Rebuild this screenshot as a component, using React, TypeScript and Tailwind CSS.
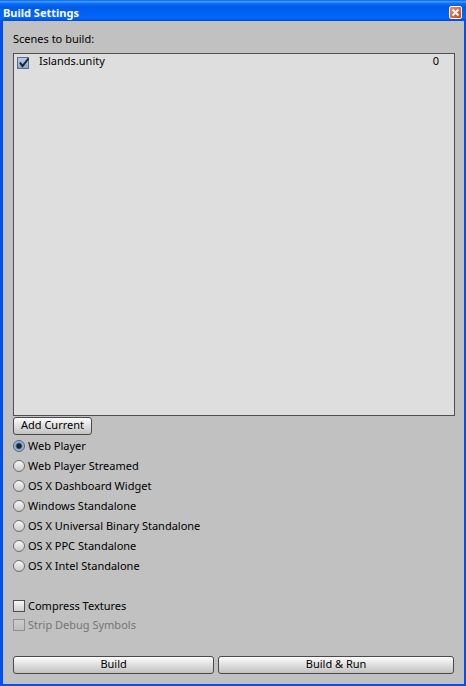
import { useState } from 'react';

const targets = [
  'Web Player',
  'Web Player Streamed',
  'OS X Dashboard Widget',
  'Windows Standalone',
  'OS X Universal Binary Standalone',
  'OS X PPC Standalone',
  'OS X Intel Standalone',
];

type CheckProps = {
  label: string;
  defaultChecked?: boolean;
  disabled?: boolean;
};

function Check({ label, defaultChecked, disabled }: CheckProps) {
  return (
    <span className="relative block size-3 shrink-0">
      <input
        type="checkbox"
        id={label}
        defaultChecked={defaultChecked}
        disabled={disabled}
        className="peer block size-3 appearance-none border border-[#505050] bg-linear-to-b from-[#f6f6f6] to-[#cfcfcf] checked:border-[#5f6f86] checked:from-[#b4cdea] checked:to-[#86a9d2] disabled:border-[#8f8f8f] disabled:from-[#cdcdcd] disabled:to-[#bdbdbd]"
      />
      <svg
        viewBox="0 0 14 13"
        className="pointer-events-none absolute top-0 left-0 hidden h-[13px] w-3.5 peer-checked:block"
      >
        <path d="M3 5.5 L5.5 9 L11.5 1.5" fill="none" stroke="#1c222b" strokeWidth="2" />
      </svg>
    </span>
  );
}

function PushButton({ children, className }: { children: string; className: string }) {
  return (
    <button
      type="button"
      className={`h-[18px] rounded-[3px] border border-[#4a4a4a] bg-linear-to-b from-[#fcfcfc] to-[#c2c2c2] pb-0.5 text-center leading-3.5 ${className}`}
    >
      {children}
    </button>
  );
}

export default function App() {
  const [target, setTarget] = useState(targets[0]);

  return (
    <div className="flex min-h-screen flex-col bg-[#0050f0] font-['Noto_Sans',sans-serif] text-[11px] leading-4 text-black">
      <header className="flex h-[21px] items-center justify-between bg-[linear-gradient(to_bottom,#0058e0_0%,#3f9bff_7%,#0a6cf5_18%,#005be8_35%,#0062f4_60%,#0068ff_85%,#0048d8_100%)] pr-1 pl-[3px]">
        <h1 className="pt-1 font-['Noto_Sans',sans-serif] text-[11px] font-bold text-white">
          Build Settings
        </h1>
        <button
          type="button"
          aria-label="Close"
          className="mt-[3px] flex size-[13px] items-center justify-center rounded-[2px] border border-white bg-linear-to-br from-[#ee8a68] to-[#d2401a]"
        >
          <svg viewBox="0 0 9 9" className="size-[9px]">
            <path d="M1.5 1.5 L7.5 7.5 M7.5 1.5 L1.5 7.5" stroke="#fff" strokeWidth="1.9" />
          </svg>
        </button>
      </header>

      <main className="mr-0.5 mb-0.5 ml-[3px] flex grow flex-col bg-[#c1c1c1] px-2.5 pt-2.5 pb-2.5">
        <h2 className="mb-1.5">Scenes to build:</h2>

        <ul className="mr-[-1px] grow border border-[#505050] bg-[#dedede]">
          <li className="flex h-3.5 items-center pr-[15px] pl-[3px]">
            <div className="pt-[3px]">
              <Check label="Islands.unity" defaultChecked />
            </div>
            <label htmlFor="Islands.unity" className="grow pl-2.5">
              Islands.unity
            </label>
            <span>0</span>
          </li>
        </ul>

        <PushButton className="mt-px w-[79px] self-start">Add Current</PushButton>

        <div role="radiogroup" aria-label="Platform" className="mt-px">
          {targets.map((name) => (
            <label key={name} className="flex h-5 items-center gap-[3px]">
              <input
                type="radio"
                name="target"
                checked={target === name}
                onChange={() => setTarget(name)}
                className="size-3 appearance-none rounded-full border border-[#6e6e6e] bg-linear-to-b from-[#f8f8f8] to-[#cacaca] checked:border-[#55657c] checked:bg-[radial-gradient(circle,#172333_0,#172333_2px,#9dbfe6_4px,#86a9d2_6px)]"
              />
              {name}
            </label>
          ))}
        </div>

        <div className="mt-5 flex h-5 items-center gap-[3px]">
          <Check label="Compress Textures" />
          <label htmlFor="Compress Textures">Compress Textures</label>
        </div>
        <div className="flex h-[18px] items-center gap-[3px]">
          <Check label="Strip Debug Symbols" disabled />
          <label htmlFor="Strip Debug Symbols" className="text-[#757575]">
            Strip Debug Symbols
          </label>
        </div>

        <div className="mt-[22px] flex gap-1">
          <PushButton className="grow-[46] basis-0">Build</PushButton>
          <PushButton className="grow-[54] basis-0">Build &amp; Run</PushButton>
        </div>
      </main>
    </div>
  );
}
